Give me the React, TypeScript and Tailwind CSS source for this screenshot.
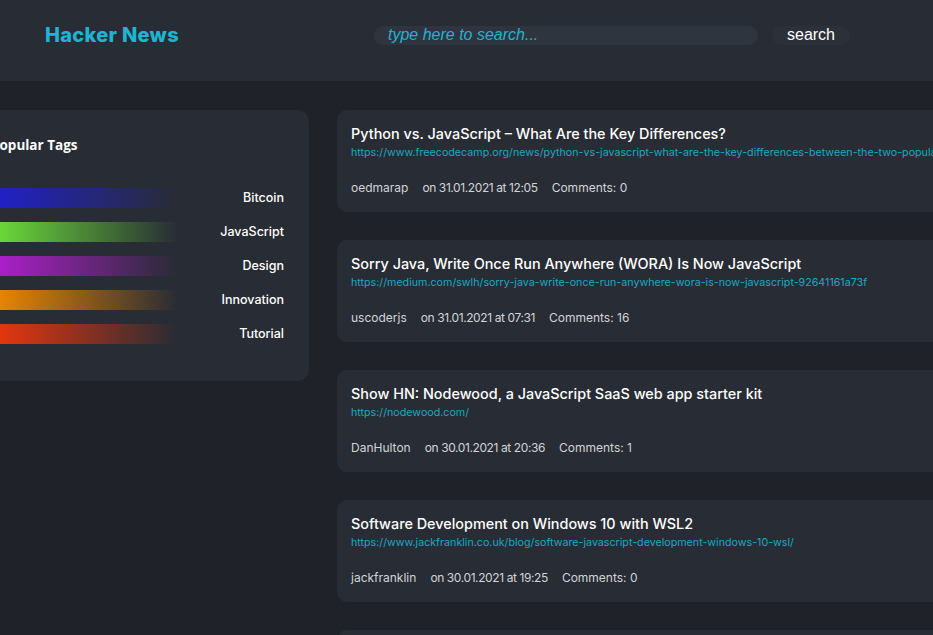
import React from "react";

type Post = {
  title: string;
  url: string;
  author: string;
  date: string;
  comments: number;
};

const posts: Post[] = [
  {
    title: "Python vs. JavaScript – What Are the Key Differences?",
    url: "https://www.freecodecamp.org/news/python-vs-javascript-what-are-the-key-differences-between-the-two-popular-programming-languages/",
    author: "oedmarap",
    date: "on 31.01.2021 at 12:05",
    comments: 0,
  },
  {
    title: "Sorry Java, Write Once Run Anywhere (WORA) Is Now JavaScript",
    url: "https://medium.com/swlh/sorry-java-write-once-run-anywhere-wora-is-now-javascript-92641161a73f",
    author: "uscoderjs",
    date: "on 31.01.2021 at 07:31",
    comments: 16,
  },
  {
    title: "Show HN: Nodewood, a JavaScript SaaS web app starter kit",
    url: "https://nodewood.com/",
    author: "DanHulton",
    date: "on 30.01.2021 at 20:36",
    comments: 1,
  },
  {
    title: "Software Development on Windows 10 with WSL2",
    url: "https://www.jackfranklin.co.uk/blog/software-javascript-development-windows-10-wsl/",
    author: "jackfranklin",
    date: "on 30.01.2021 at 19:25",
    comments: 0,
  },
  {
    title: "JavaScript Pro Tips",
    url: "https://example.com/",
    author: "someone",
    date: "on 30.01.2021 at 18:00",
    comments: 0,
  },
];

const tags = [
  { name: "Bitcoin", bar: "from-[#2020d0]" },
  { name: "JavaScript", bar: "from-[#6ee23a]" },
  { name: "Design", bar: "from-[#b41ed2]" },
  { name: "Innovation", bar: "from-[#f48a00]" },
  { name: "Tutorial", bar: "from-[#f0360c]" },
];

function PostCard({ p }: { p: Post }) {
  return (
    <article className="h-[102px] w-[720px] shrink-0 rounded-[10px] bg-[#282c34] pl-[14px] pt-[14px]">
      <h3 className="text-[14.4px] font-medium leading-[20px] text-white whitespace-nowrap">{p.title}</h3>
      <a className="mt-[1px] block text-[10.7px] leading-[15px] text-[#1ba9c2] whitespace-nowrap">{p.url}</a>
      <div className="mt-[20px] flex gap-[14px] text-[12px] leading-[16px] text-[#d2d4d8]">
        <span>{p.author}</span>
        <span className="tracking-[-0.4px]">{p.date}</span>
        <span>Comments: {p.comments}</span>
      </div>
    </article>
  );
}

export default function App() {
  return (
    <div className="min-h-screen overflow-hidden bg-[#1f2329]" style={{ fontFamily: "Inter, 'Noto Sans', sans-serif" }}>
      <header className="flex h-[81px] items-center bg-[#282d35]">
        <div className="ml-[45px] w-[329px] -mt-[12px] text-[20px] font-extrabold tracking-[0.3px] text-[#1cb6d2]">
          Hacker News
        </div>
        <div className="-mt-[11px] flex items-center" style={{ fontFamily: "'Liberation Sans', Arial, sans-serif" }}>
          <div className="flex h-[19px] w-[384px] items-center rounded-full bg-[#2f353e] pl-[14px] text-[16px] italic text-[#1fb3cf]">
            type here to search...
          </div>
          <button className="ml-[14px] flex h-[19px] w-[78px] items-center justify-center rounded-full bg-[#2c3139] text-[16px] text-white">
            search
          </button>
        </div>
      </header>

      <main className="flex pt-[29px]">
        <aside className="-ml-[26px] h-[271px] w-[335px] shrink-0 rounded-[12px] bg-[#282c34] pt-[25px]">
          <h2 className="pl-[17px] text-[13.5px] font-bold text-white" style={{ fontFamily: "'Open Sans', sans-serif" }}>
            Popular Tags
          </h2>
          <ul className="mt-[33px] flex flex-col gap-[14px]">
            {tags.map((t) => (
              <li key={t.name} className="flex h-[20px] items-center">
                <div className={`ml-[14px] h-[20px] w-[190px] bg-gradient-to-r ${t.bar} to-transparent`} />
                <span className="ml-auto mr-[25px] text-[12.5px] font-medium text-white">{t.name}</span>
              </li>
            ))}
          </ul>
        </aside>

        <section className="ml-[28px] flex flex-col gap-[28px]">
          {posts.map((p, i) => (
            <PostCard key={i} p={p} />
          ))}
        </section>
      </main>
    </div>
  );
}
